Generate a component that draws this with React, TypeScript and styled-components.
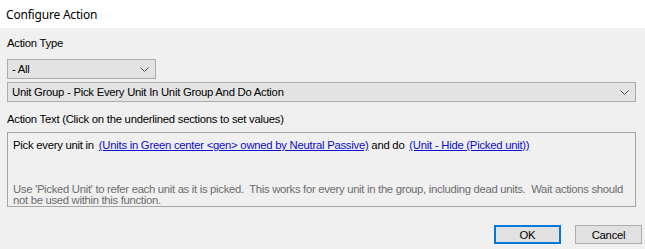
import React from 'react';
import styled, { createGlobalStyle } from 'styled-components';

const Global = createGlobalStyle`
  html, body {
    margin: 0;
    padding: 0;
    background: #f0f0f0;
  }
  body {
    font-family: "Liberation Sans", Arial, sans-serif;
    font-size: 11.3px;
    color: #000;
  }
`;

const Window = styled.div`
  width: 645px;
  height: 249px;
  display: flex;
  flex-direction: column;
  background: #f0f0f0;
  overflow: hidden;
`;

const TitleBar = styled.div`
  height: 28px;
  background: #fff;
  display: flex;
  align-items: center;
  padding-left: 6px;
  font-size: 12px;
  font-family: "Noto Sans", "Liberation Sans", sans-serif;
  letter-spacing: -0.2px;
`;

const Body = styled.div`
  display: flex;
  flex-direction: column;
  padding: 8px 9px 0 7px;
`;

const Label = styled.div<{ $top?: number }>`
  line-height: 15px;
  margin-top: ${p => p.$top ?? 0}px;
  letter-spacing: -0.25px;
`;

const Select = styled.div<{ $width?: number; $top?: number }>`
  box-sizing: border-box;
  height: 20px;
  width: ${p => (p.$width ? `${p.$width}px` : '100%')};
  margin-top: ${p => p.$top ?? 0}px;
  background: #e3e3e3;
  border: 1px solid #acacac;
  display: flex;
  align-items: center;
  justify-content: space-between;
  padding: 0 6px 0 4px;
  letter-spacing: -0.25px;
`;

const Chevron = () => (
  <svg width="9" height="5" viewBox="0 0 9 5">
    <polyline points="0.5,0.5 4.5,4.5 8.5,0.5" fill="none" stroke="#4a4a4a" strokeWidth="1" />
  </svg>
);

const TextBox = styled.div`
  box-sizing: border-box;
  height: 75px;
  margin-top: 5px;
  border: 1px solid #a5a5a5;
  padding: 5px 5px 0 5px;
  display: flex;
  flex-direction: column;
  letter-spacing: -0.25px;
`;

const Line = styled.div`
  line-height: 15px;
`;

const Link = styled.span`
  color: #0b0bd6;
  text-decoration: underline;
  margin-left: 2px;
`;

const Help = styled.div`
  color: #6d6d6d;
  line-height: 11px;
  margin-top: 31px;
  letter-spacing: -0.3px;
`;

const Footer = styled.div`
  display: flex;
  justify-content: flex-end;
  gap: 14px;
  margin-top: 18px;
  margin-right: -6px;
`;

const Button = styled.button<{ $primary?: boolean }>`
  box-sizing: border-box;
  width: 67px;
  height: 19px;
  background: #e1e1e1;
  border: ${p => (p.$primary ? '2px solid #0078d7' : '1px solid #adadad')};
  font: inherit;
  letter-spacing: -0.25px;
  padding: 0;
  color: #000;
`;

export default function App() {
  return (
    <Window>
      <Global />
      <TitleBar>Configure Action</TitleBar>
      <Body>
        <Label>Action Type</Label>
        <Select $width={149} $top={8}>
          <span>- All</span>
          <Chevron />
        </Select>
        <Select $top={3}>
          <span>Unit Group - Pick Every Unit In Unit Group And Do Action</span>
          <Chevron />
        </Select>
        <Label $top={10}>Action Text (Click on the underlined sections to set values)</Label>
        <TextBox>
          <Line>
            Pick every unit in <Link>(Units in Green center &lt;gen&gt; owned by Neutral Passive)</Link> and do{' '}
            <Link>(Unit - Hide (Picked unit))</Link>
          </Line>
          <Help>
            Use 'Picked Unit' to refer each unit as it is picked.&nbsp; This works for every unit in the group, including dead units.&nbsp; Wait actions should not be used within this function.
          </Help>
        </TextBox>
        <Footer>
          <Button $primary>OK</Button>
          <Button>Cancel</Button>
        </Footer>
      </Body>
    </Window>
  );
}
